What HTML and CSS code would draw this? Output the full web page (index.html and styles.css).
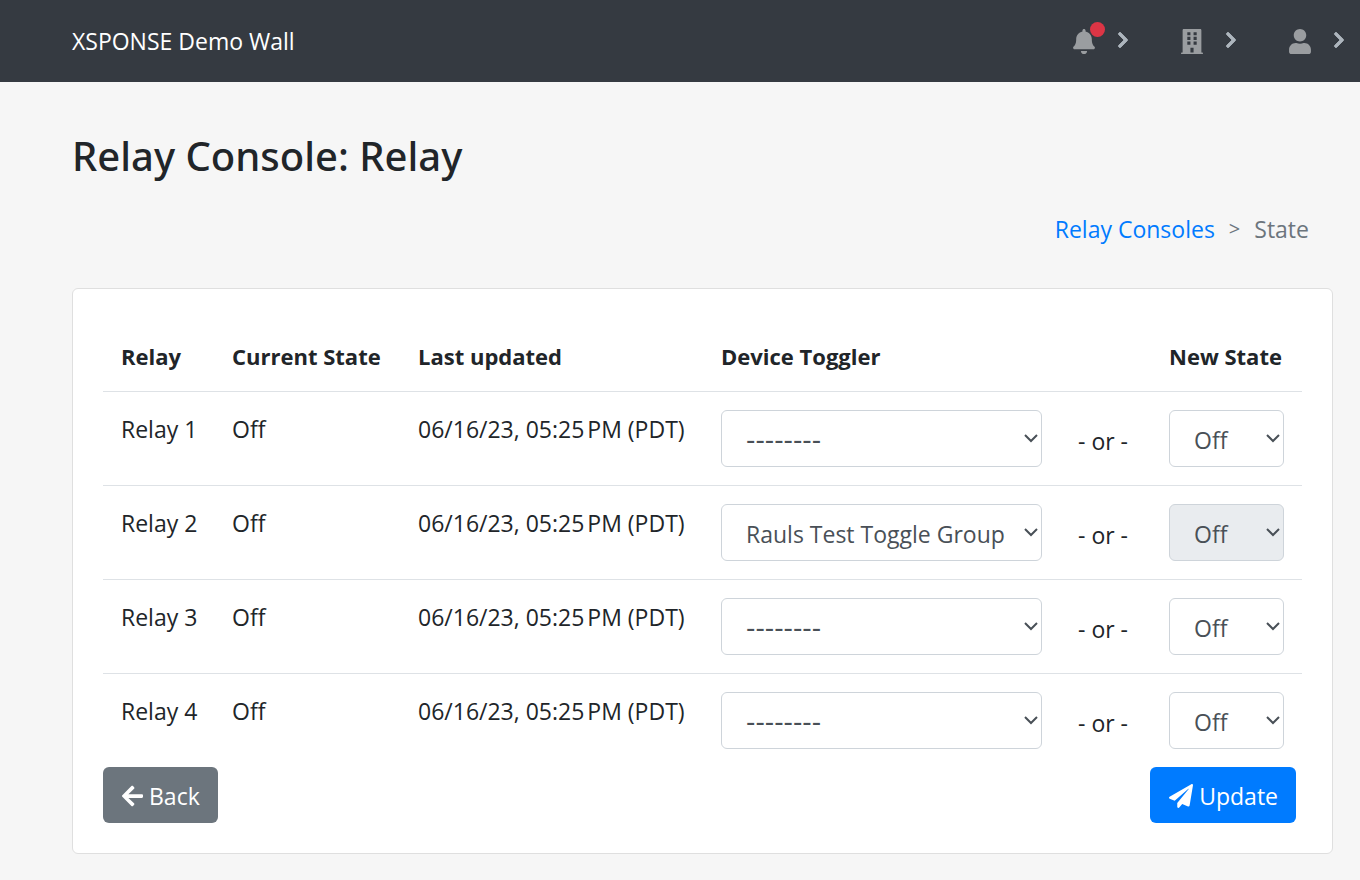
FILE: index.html
```html
<!DOCTYPE html>
<html lang="en">
<head>
<meta charset="utf-8">
<title>Relay Console: Relay</title>
<link rel="stylesheet" href="styles.css">
</head>
<body>
<svg class="sprite" aria-hidden="true">
  <symbol id="chevron" viewBox="0 0 320 512"><path d="M285.476 272.971L91.132 467.314c-9.373 9.373-24.569 9.373-33.941 0l-22.667-22.667c-9.357-9.357-9.375-24.522-.04-33.901L188.505 256 34.484 101.255c-9.335-9.379-9.317-24.544.04-33.901l22.667-22.667c9.373-9.373 24.569-9.373 33.941 0L285.475 239.03c9.373 9.372 9.373 24.568.001 33.941z"/></symbol>
</svg>
<header class="navbar">
  <a class="brand" href="#">XSPONSE Demo Wall</a>
  <nav class="menu" aria-label="Account">
    <button class="menu-item" type="button" aria-label="Notifications">
      <span class="bell">
        <svg class="icon" viewBox="0 0 448 512"><path d="M224 512c35.32 0 63.97-28.65 63.97-64H160.03c0 35.35 28.65 64 63.97 64zm215.39-149.71c-19.32-20.76-55.47-51.99-55.47-154.29 0-77.7-54.48-139.9-127.94-155.16V32c0-17.67-14.32-32-31.98-32s-31.98 14.33-31.98 32v20.84C118.56 68.1 64.08 130.3 64.08 208c0 102.3-36.15 133.53-55.47 154.29-6 6.45-8.66 14.16-8.61 21.71.11 16.4 12.98 32 32.1 32h383.8c19.12 0 32-15.6 32.1-32 .05-7.55-2.61-15.27-8.61-21.71z"/></svg>
        <span class="dot"></span>
      </span>
      <svg class="chevron"><use href="#chevron"/></svg>
    </button>
    <button class="menu-item" type="button" aria-label="Organization">
      <svg class="icon" viewBox="0 0 448 512"><path fill-rule="evenodd" d="M436 480h-20V24c0-13.3-10.700-24-24-24H56C42.700 0 32 10.700 32 24v456H12c-6.600 0-12 5.400-12 12v20h448v-20c0-6.600-5.400-12-12-12zM128 64h64v64h-64zM256 64h64v64h-64zM128 160h64v64h-64zM256 160h64v64h-64zM128 256h64v64h-64zM256 256h64v64h-64zM192 384h64v96h-64z"/></svg>
      <svg class="chevron"><use href="#chevron"/></svg>
    </button>
    <button class="menu-item" type="button" aria-label="User">
      <svg class="icon" viewBox="0 0 448 512"><path d="M224 256c70.7 0 128-57.3 128-128S294.7 0 224 0 96 57.3 96 128s57.3 128 128 128zm89.6 32h-16.7c-22.2 10.2-46.9 16-72.9 16s-50.6-5.8-72.9-16h-16.7C60.2 288 0 348.2 0 422.4V464c0 26.500 21.500 48 48 48h352c26.500 0 48-21.500 48-48v-41.600c0-74.200-60.200-134.400-134.400-134.400z"/></svg>
      <svg class="chevron"><use href="#chevron"/></svg>
    </button>
  </nav>
</header>
<main class="page">
  <h1 class="title">Relay Console: Relay</h1>
  <nav class="breadcrumb" aria-label="Breadcrumb">
    <a class="crumb-link" href="#">Relay Consoles</a>
    <span class="separator">&gt;</span>
    <span>State</span>
  </nav>
  <form class="card">
    <table class="relays">
      <colgroup><col class="col-relay"><col class="col-current"><col class="col-updated"><col><col class="col-or"><col class="col-new"></colgroup>
      <thead>
        <tr><th>Relay</th><th>Current State</th><th>Last updated</th><th>Device Toggler</th><th></th><th>New State</th></tr>
      </thead>
      <tbody>
        <tr>
          <td>Relay 1</td><td>Off</td><td>06/16/23, 05:25&#8239;PM (PDT)</td>
          <td><select class="select unset" aria-label="Relay 1 device toggler"><option>--------</option></select></td>
          <td><span class="or">- or -</span></td>
          <td><select class="select" aria-label="Relay 1 new state"><option>Off</option><option>On</option></select></td>
        </tr>
        <tr>
          <td>Relay 2</td><td>Off</td><td>06/16/23, 05:25&#8239;PM (PDT)</td>
          <td><select class="select" aria-label="Relay 2 device toggler"><option>Rauls Test Toggle Group</option></select></td>
          <td><span class="or">- or -</span></td>
          <td><select class="select" aria-label="Relay 2 new state" disabled><option>Off</option><option>On</option></select></td>
        </tr>
        <tr>
          <td>Relay 3</td><td>Off</td><td>06/16/23, 05:25&#8239;PM (PDT)</td>
          <td><select class="select unset" aria-label="Relay 3 device toggler"><option>--------</option></select></td>
          <td><span class="or">- or -</span></td>
          <td><select class="select" aria-label="Relay 3 new state"><option>Off</option><option>On</option></select></td>
        </tr>
        <tr>
          <td>Relay 4</td><td>Off</td><td>06/16/23, 05:25&#8239;PM (PDT)</td>
          <td><select class="select unset" aria-label="Relay 4 device toggler"><option>--------</option></select></td>
          <td><span class="or">- or -</span></td>
          <td><select class="select" aria-label="Relay 4 new state"><option>Off</option><option>On</option></select></td>
        </tr>
      </tbody>
    </table>
    <div class="actions">
      <button class="button back" type="button">
        <svg class="arrow" viewBox="0 0 448 512"><path d="M257.5 445.1l-22.2 22.2c-9.4 9.4-24.6 9.4-33.9 0L7 273c-9.4-9.4-9.4-24.6 0-33.9L201.4 44.7c9.4-9.4 24.6-9.4 33.9 0l22.2 22.2c9.5 9.5 9.3 25-.4 34.3L136.6 216H424c13.3 0 24 10.7 24 24v32c0 13.3-10.7 24-24 24H136.600l120.500 114.800c9.800 9.300 10 24.800.4 34.300z"/></svg>
        Back
      </button>
      <button class="button update" type="submit">
        <svg class="plane" viewBox="0 0 512 512"><path d="M476 3.2L12.5 270.6c-18.1 10.4-15.8 35.6 2.2 43.2L121 358.4l287.3-253.2c5.5-4.9 13.3 2.6 8.600 8.300L176 407v80.500c0 23.600 28.500 32.900 42.500 15.800L282 426l124.600 52.200c14.200 6 30.400-2.900 33-18.200l72-432C515 7.800 493.300-6.800 476 3.200z"/></svg>
        Update
      </button>
    </div>
  </form>
</main>
</body>
</html>
```
FILE: styles.css
```css
* { box-sizing: border-box; }

body {
  margin: 0;
  background: #f6f6f6;
  color: #212529;
  font: 23px/36px "Segoe UI", "Open Sans", "Noto Sans", sans-serif;
}

button, select { font: inherit; }

svg { fill: currentColor; }

.sprite { display: none; }

.navbar {
  display: flex;
  align-items: center;
  justify-content: space-between;
  min-height: 82px;
  padding: 0 15px 0 72px;
  background: #353a41;
}

.brand { color: #fff; text-decoration: none; }

.menu { display: flex; gap: 52px; }

.menu-item {
  display: flex;
  align-items: center;
  gap: 22px;
  padding: 0;
  border: 0;
  background: none;
  color: #9a9da0;
}

.icon { display: block; width: 22px; height: 25px; }

.chevron {
  width: 12px;
  height: 18px;
  margin-bottom: 2px;
  color: #adb5bd;
  stroke: currentColor;
  stroke-width: 24;
}

.bell { position: relative; }

.dot {
  position: absolute;
  top: -7px;
  right: -10px;
  width: 15px;
  height: 15px;
  border-radius: 50%;
  background: #dc3545;
}

.page { padding: 47px 27px 26px 72px; }

.title {
  margin: 0;
  font-family: "Segoe UI", "Noto Sans", sans-serif;
  font-size: 40px;
  font-weight: 500;
  line-height: 54px;
}

.breadcrumb {
  display: flex;
  justify-content: flex-end;
  gap: 14px;
  padding: 28px 24px 41px;
  color: #6c757d;
}

.crumb-link { color: #007bff; text-decoration: none; }

.separator { font-size: 20px; }

.card {
  padding: 30px;
  border: 1px solid #dfdfdf;
  border-radius: 6px;
  background: #fff;
}

.relays {
  width: 100%;
  table-layout: fixed;
  border-spacing: 0;
  line-height: 38px;
}

.col-relay { width: 111px; }
.col-current { width: 186px; }
.col-updated { width: 303px; }
.col-or { width: 91px; }
.col-new { width: 151px; }

.relays th, .relays td {
  padding: 18px;
  text-align: left;
  vertical-align: top;
  white-space: nowrap;
}

.relays th {
  padding-bottom: 16px;
  font-size: 22px;
  font-weight: 700;
}

.relays td { border-top: 1px solid #dee2e6; }

.or { display: block; padding-top: 12px; }

.select {
  display: block;
  width: 100%;
  height: 57px;
  padding: 2px 32px 0 24px;
  border: 1px solid #ced4da;
  border-radius: 6px;
  appearance: none;
  background: #fff url("data:image/svg+xml,%3Csvg xmlns='http://www.w3.org/2000/svg' width='14' height='9'%3E%3Cpath d='M1 1l6 6 6-6' fill='none' stroke='%23495057' stroke-width='2'/%3E%3C/svg%3E") no-repeat right 3px center;
  color: #495057;
}

.unset { font-family: "DejaVu Sans", sans-serif; font-size: 26px; }

.select:disabled { background-color: #e9ecef; opacity: 1; }

.actions {
  display: flex;
  justify-content: space-between;
  padding-right: 6px;
}

.button {
  display: flex;
  align-items: center;
  gap: 6px;
  height: 56px;
  padding: 2px 18px 0 19px;
  border: 0;
  border-radius: 6px;
  color: #fff;
}

.back { background: #6c757d; }
.update { background: #007bff; }

.arrow { width: 21px; height: 24px; }
.plane { width: 24px; height: 24px; }
```
